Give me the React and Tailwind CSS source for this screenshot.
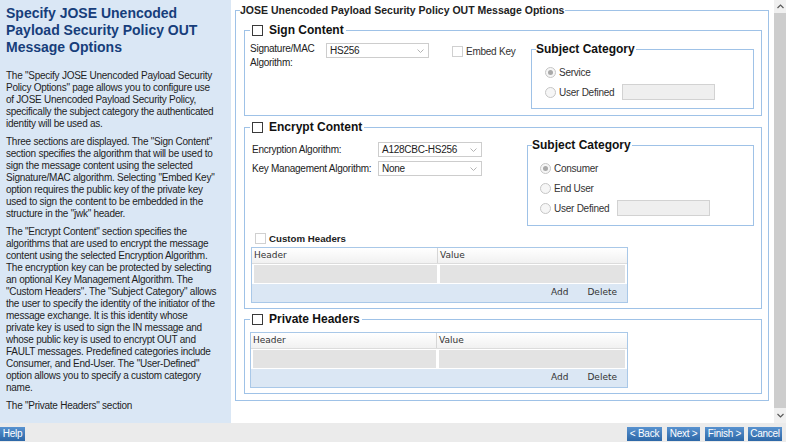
import React from 'react';

const BASE = "font-['Liberation_Sans',Arial,sans-serif] tracking-[-0.25px]";
const BOLD = "font-['Liberation_Sans',Arial,sans-serif] font-bold tracking-normal";

// small square checkbox (dark = enabled, light = disabled)
const CheckBox = ({ disabled }) => (
  <span
    className={
      disabled
        ? 'block w-[11px] h-[11px] shrink-0 border border-[#d0d0d0] bg-white'
        : 'block w-[11px] h-[11px] shrink-0 border border-[#3a3a3a] bg-white'
    }
  />
);

const Radio = ({ checked }) => (
  <span className="flex w-[11px] h-[11px] shrink-0 items-center justify-center rounded-full border border-[#c6c6c6] bg-[#f6f6f6]">
    {checked && <span className="block w-[5px] h-[5px] rounded-full bg-[#a9a9a9]" />}
  </span>
);

const Select = ({ value, className }) => (
  <div className={`flex h-[15px] items-center justify-between border border-[#cdcdcd] bg-white pl-[3px] pr-[4px] text-[10px] leading-[13px] text-[#222] ${className}`}>
    <span>{value}</span>
    <svg width="7" height="4" viewBox="0 0 7 4">
      <path d="M0.5 0.5L3.5 3.5L6.5 0.5" fill="none" stroke="#b4b4b4" strokeWidth="1" />
    </svg>
  </div>
);

// fieldset with a checkbox in its legend
const Section = ({ title, className, children }) => (
  <fieldset className={`border border-[#9fc2e7] pl-[5px] pr-[7px] ${className}`}>
    <legend className="pl-[2px] pr-[2px]">
      <span className="flex h-[15px] items-center gap-[6px]">
        <CheckBox />
        <span className={`${BOLD} text-[12px] leading-[15px] text-[#111]`}>{title}</span>
      </span>
    </legend>
    {children}
  </fieldset>
);

const SubjectCategory = ({ options, className, listClass }) => (
  <fieldset className={`border border-[#9fc2e7] pl-[4px] ${className}`}>
    <legend className="pr-[1px]">
      <span className={`${BOLD} block text-[12px] leading-[14px] text-[#111]`}>Subject Category</span>
    </legend>
    <div className={`mt-[8px] flex flex-col gap-[4px] ${listClass}`}>
      {options.map((opt, i) => (
        <div key={opt} className="flex h-[16px] items-center">
          <Radio checked={i === 0} />
          <span className="ml-[3px] text-[10px] text-[#333]">{opt}</span>
          {opt === 'User Defined' && (
            <span className="ml-[8px] block h-[16px] w-[93px] border border-[#d2d2d2] bg-[#efefef]" />
          )}
        </div>
      ))}
    </div>
  </fieldset>
);

const HeaderTable = ({ className }) => (
  <div className={`flex h-[56px] flex-col border border-[#a9c8e8] font-['DejaVu_Sans',sans-serif] text-[9px] tracking-normal text-[#333] ${className}`}>
    <div className="flex h-[16px] border-b border-[#dcdcdc] bg-linear-to-b from-white to-[#f1f1f1]">
      <div className="flex w-[186px] items-center border-r border-[#d6d6d6] pl-[2px]">Header</div>
      <div className="flex flex-1 items-center pl-[2px]">Value</div>
    </div>
    <div className="flex h-[20px] gap-[3px] bg-white px-[2px] py-[1px]">
      <div className="w-[183px] bg-[#e3e3e3]" />
      <div className="flex-1 bg-[#e3e3e3]" />
    </div>
    <div className="flex flex-1 items-center justify-end gap-[19px] bg-[#dbe7f4] pr-[10px]">
      <span>Add</span>
      <span>Delete</span>
    </div>
  </div>
);

const Chevron = ({ up }) => (
  <svg width="7" height="5" viewBox="0 0 7 5">
    <path d={up ? 'M0.5 4L3.5 1L6.5 4' : 'M0.5 1L3.5 4L6.5 1'} fill="none" stroke="#5a5a5a" strokeWidth="1.2" />
  </svg>
);

const help = [
  [
    'The "Specify JOSE Unencoded Payload Security',
    'Policy Options" page allows you to configure use',
    'of JOSE Unencoded Payload Security Policy,',
    'specifically the subject category the authenticated',
    'identity will be used as.',
  ],
  [
    'Three sections are displayed. The "Sign Content"',
    'section specifies the algorithm that will be used to',
    'sign the message content using the selected',
    'Signature/MAC algorithm. Selecting "Embed Key"',
    'option requires the public key of the private key',
    'used to sign the content to be embedded in the',
    'structure in the "jwk" header.',
  ],
  [
    'The "Encrypt Content" section specifies the',
    'algorithms that are used to encrypt the message',
    'content using the selected Encryption Algorithm.',
    'The encryption key can be protected by selecting',
    'an optional Key Management Algorithm. The',
    '"Custom Headers". The "Subject Category" allows',
    'the user to specify the identity of the initiator of the',
    'message exchange. It is this identity whose',
    'private key is used to sign the IN message and',
    'whose public key is used to encrypt OUT and',
    'FAULT messages. Predefined categories include',
    'Consumer, and End-User. The "User-Defined"',
    'option allows you to specify a custom category',
    'name.',
  ],
  ['The "Private Headers" section'],
];

const WizardButton = ({ label, className }) => (
  <button
    type="button"
    className={`flex h-[14px] items-center justify-center whitespace-nowrap bg-linear-to-b from-[#5892cf] to-[#2c67a7] text-[10px] leading-[14px] text-white ${className}`}
  >
    {label}
  </button>
);

export default function App() {
  return (
    <div className={`${BASE} flex h-[442px] w-[786px] flex-col overflow-hidden bg-white text-[#222]`}>
      <div className="flex min-h-0 flex-1">
        {/* help panel */}
        <aside className="w-[231px] shrink-0 overflow-hidden bg-[#dae7f5] pl-[6px] pt-[5px]">
          <h1 className={`${BOLD} text-[14px] leading-[17px] text-[#173e7b]`}>
            Specify JOSE Unencoded
            <br />
            Payload Security Policy OUT
            <br />
            Message Options
          </h1>
          <div className="mt-[14px] flex flex-col gap-[6px] text-[10px] leading-[12px] text-[#1e1e1e]">
            {help.map((para, i) => (
              <p key={i}>
                {para.map((line) => (
                  <span key={line} className="block whitespace-nowrap">
                    {line}
                  </span>
                ))}
              </p>
            ))}
          </div>
        </aside>

        {/* form */}
        <main className="min-w-0 flex-1 pl-[4px] pr-[5px] pt-[4px]">
          <fieldset className="border border-[#9fc2e7] pb-[6px] pl-[4px] pr-[6px]">
            <legend className="pr-[1px]">
              <span className={`${BOLD} block text-[10.5px] leading-[13px] text-[#222]`}>
                JOSE Unencoded Payload Security Policy OUT Message Options
              </span>
            </legend>

            <Section title="Sign Content" className="ml-[4px] mt-[6px] h-[93px]">
              <div className="flex items-start pt-[4px]">
                <div className="w-[76px] text-[10px] leading-[14px] text-[#222]">
                  Signature/MAC
                  <br />
                  Algorithm:
                </div>
                <Select value="HS256" className="mt-[1px] w-[103px]" />
                <div className="ml-[23px] mt-[2px] flex h-[15px] items-center">
                  <CheckBox disabled />
                  <span className="ml-[3px] text-[10px] text-[#333]">Embed Key</span>
                </div>
                <SubjectCategory
                  options={['Service', 'User Defined']}
                  className="ml-auto h-[67px] w-[223px]"
                  listClass="ml-[9px]"
                />
              </div>
            </Section>

            <Section title="Encrypt Content" className="ml-[4px] mt-[4px] h-[189px]">
              <div className="flex items-start pt-[3px]">
                <div className="ml-[2px] mt-[4px] flex flex-col gap-[4px] text-[10px] text-[#222]">
                  <div className="flex items-center">
                    <span className="w-[126px] whitespace-nowrap">Encryption Algorithm:</span>
                    <Select value="A128CBC-HS256" className="w-[104px]" />
                  </div>
                  <div className="flex items-center">
                    <span className="w-[126px] whitespace-nowrap">Key Management Algorithm:</span>
                    <Select value="None" className="w-[104px]" />
                  </div>
                </div>
                <SubjectCategory
                  options={['Consumer', 'End User', 'User Defined']}
                  className="ml-auto h-[88px] w-[227px]"
                  listClass="ml-[8px]"
                />
              </div>
              <div className="ml-[5px] mt-[7px] flex h-[11px] items-center">
                <CheckBox disabled />
                <span className={`${BOLD} ml-[3px] text-[9.7px] leading-[11px] text-[#222]`}>Custom Headers</span>
              </div>
              <HeaderTable className="ml-[1px] mt-[3px] w-[377px]" />
            </Section>

            <Section title="Private Headers" className="ml-[4px] mt-[3px] h-[82px]">
              <HeaderTable className="mt-[5px] w-[378px]" />
            </Section>
          </fieldset>
        </main>

        {/* scrollbar */}
        <div className="flex w-[12px] shrink-0 flex-col bg-[#f0f0f0]">
          <div className="flex h-[13px] items-center justify-center">
            <Chevron up />
          </div>
          <div className="flex-1 bg-[#cdcdcd]" />
          <div className="flex h-[15px] items-center justify-center">
            <Chevron />
          </div>
        </div>
      </div>

      {/* wizard buttons */}
      <footer className="flex h-[19px] shrink-0 items-start justify-between bg-[#ebebeb] pr-[4px] pt-[4px]">
        <WizardButton label="Help" className="w-[25px]" />
        <div className="flex">
          <WizardButton label="< Back" className="w-[35px]" />
          <WizardButton label="Next >" className="ml-[5px] w-[33px]" />
          <WizardButton label="Finish >" className="ml-[5px] w-[39px]" />
          <WizardButton label="Cancel" className="ml-[4px] w-[34px]" />
        </div>
      </footer>
    </div>
  );
}
